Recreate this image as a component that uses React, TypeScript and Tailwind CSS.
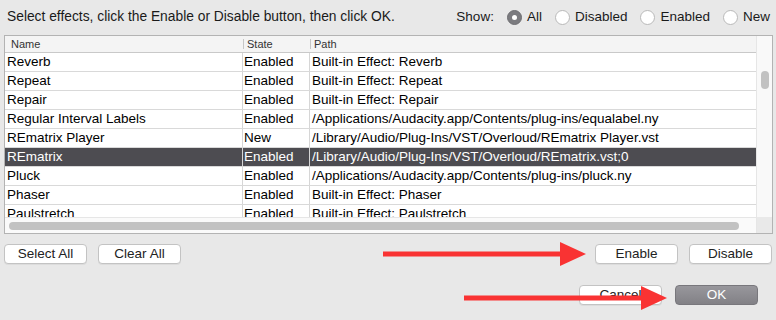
const rows = [
  { name: 'Reverb', state: 'Enabled', path: 'Built-in Effect: Reverb' },
  { name: 'Repeat', state: 'Enabled', path: 'Built-in Effect: Repeat' },
  { name: 'Repair', state: 'Enabled', path: 'Built-in Effect: Repair' },
  { name: 'Regular Interval Labels', state: 'Enabled', path: '/Applications/Audacity.app/Contents/plug-ins/equalabel.ny' },
  { name: 'REmatrix Player', state: 'New', path: '/Library/Audio/Plug-Ins/VST/Overloud/REmatrix Player.vst' },
  { name: 'REmatrix', state: 'Enabled', path: '/Library/Audio/Plug-Ins/VST/Overloud/REmatrix.vst;0', selected: true },
  { name: 'Pluck', state: 'Enabled', path: '/Applications/Audacity.app/Contents/plug-ins/pluck.ny' },
  { name: 'Phaser', state: 'Enabled', path: 'Built-in Effect: Phaser' },
  { name: 'Paulstretch', state: 'Enabled', path: 'Built-in Effect: Paulstretch' },
]

function Radio({ label, checked }: { label: string; checked?: boolean }) {
  return (
    <div className="flex items-center gap-[5px]">
      {checked ? (
        <div className="w-[15px] h-[15px] rounded-full bg-[#7b7b7f] border border-[#6e6e72] flex items-center justify-center">
          <div className="w-[5px] h-[5px] rounded-full bg-white" />
        </div>
      ) : (
        <div className="w-[15px] h-[15px] rounded-full bg-white border border-[#b9b9b9]" />
      )}
      <span>{label}</span>
    </div>
  )
}

function Button({ label, className = '' }: { label: string; className?: string }) {
  return (
    <button className={`h-[20px] w-[83px] rounded-[4px] bg-white border border-[#c3c3c3] text-[13.5px] leading-none text-[#222] shadow-[0_1px_0_rgba(0,0,0,0.05)] ${className}`}>
      {label}
    </button>
  )
}

function Arrow({ x1, x2, y, head }: { x1: number; x2: number; y: number; head: number }) {
  // red annotation arrow laid over the dialog
  const w = x2 - x1
  return (
    <svg
      className="absolute"
      style={{ left: x1, top: y - head / 2 }}
      width={w}
      height={head}
      viewBox={`0 0 ${w} ${head}`}
    >
      <rect x={0} y={head / 2 - 2.5} width={w - 24} height={5} fill="#f93333" />
      <polygon points={`${w - 26},0 ${w},${head / 2} ${w - 26},${head}`} fill="#f93333" />
    </svg>
  )
}

export default function App() {
  return (
    <div
      className="relative w-[776px] h-[320px] overflow-hidden bg-[#e8e8e8] text-[13.5px] text-[#1a1a1a]"
      style={{ fontFamily: '"Liberation Sans", Arial, sans-serif' }}
    >
      {/* Top bar */}
      <div className="h-[35px] flex items-center pl-[7px] pr-[6px]">
        <span className="text-[13.8px]">Select effects, click the Enable or Disable button, then click OK.</span>
        <div className="ml-auto flex items-center">
          <span className="mr-[13px]">Show:</span>
          <div className="flex items-center gap-[13px]">
            <Radio label="All" checked />
            <Radio label="Disabled" />
            <Radio label="Enabled" />
            <Radio label="New" />
          </div>
        </div>
      </div>

      {/* Table */}
      <div className="ml-[4px] w-[769px] h-[199px] border border-[#b3b3b3] bg-white flex">
        <div className="flex-1 flex flex-col min-w-0">
          <div className="h-[17px] flex bg-[#f4f4f4] border-b border-[#c9c9c9] text-[11px] text-[#333]">
            <div className="w-[238px] flex items-center pl-[6px]">Name</div>
            <div className="w-[67px] flex items-center border-l border-[#c6c6c6] pl-[3px] my-[3px]">State</div>
            <div className="flex-1 flex items-center border-l border-[#c6c6c6] pl-[3px] my-[3px]">Path</div>
          </div>
          <div className="flex-1 overflow-hidden">
            {rows.map((r) => (
              <div
                key={r.name}
                className={`h-[19px] flex border-b border-[#d9d9d9] whitespace-nowrap ${r.selected ? 'bg-[#4d4c51] text-white' : 'text-black'}`}
              >
                <div className="w-[238px] flex items-center pl-[2px] border-r border-[#d6d6d6]">{r.name}</div>
                <div className="w-[67px] flex items-center pl-[1px] border-r border-[#d6d6d6]">{r.state}</div>
                <div className="flex-1 flex items-center pl-[2px]">{r.path}</div>
              </div>
            ))}
          </div>
          <div className="h-[16px] bg-[#fafafa] border-t border-[#e6e6e6] flex items-center pl-[4px]">
            <div className="w-[730px] h-[8px] rounded-full bg-[#c2c2c2]" />
          </div>
        </div>
        <div className="w-[16px] flex flex-col bg-[#f9f9f9] border-l border-[#e6e6e6]">
          <div className="flex-1 pt-[35px] flex justify-center">
            <div className="w-[8px] h-[18px] rounded-full bg-[#c2c2c2]" />
          </div>
          <div className="h-[16px] bg-[#e9e9e9]" />
        </div>
      </div>

      {/* Buttons */}
      <div className="mt-[10px] px-[4px] flex items-center">
        <div className="flex gap-[11px]">
          <Button label="Select All" />
          <Button label="Clear All" />
        </div>
        <div className="ml-auto flex gap-[11px]">
          <Button label="Enable" />
          <Button label="Disable" />
        </div>
      </div>
      <div className="mt-[21px] pr-[18px] flex justify-end gap-[13px]">
        <Button label="Cancel" />
        <button className="h-[20px] w-[83px] rounded-[4px] bg-gradient-to-b from-[#98979c] to-[#828186] border border-[#78777c] text-[13.5px] leading-none text-white">
          OK
        </button>
      </div>

      {/* annotation arrows */}
      <Arrow x1={383} x2={586} y={254} head={24} />
      <Arrow x1={464} x2={667} y={298} head={24} />
    </div>
  )
}
